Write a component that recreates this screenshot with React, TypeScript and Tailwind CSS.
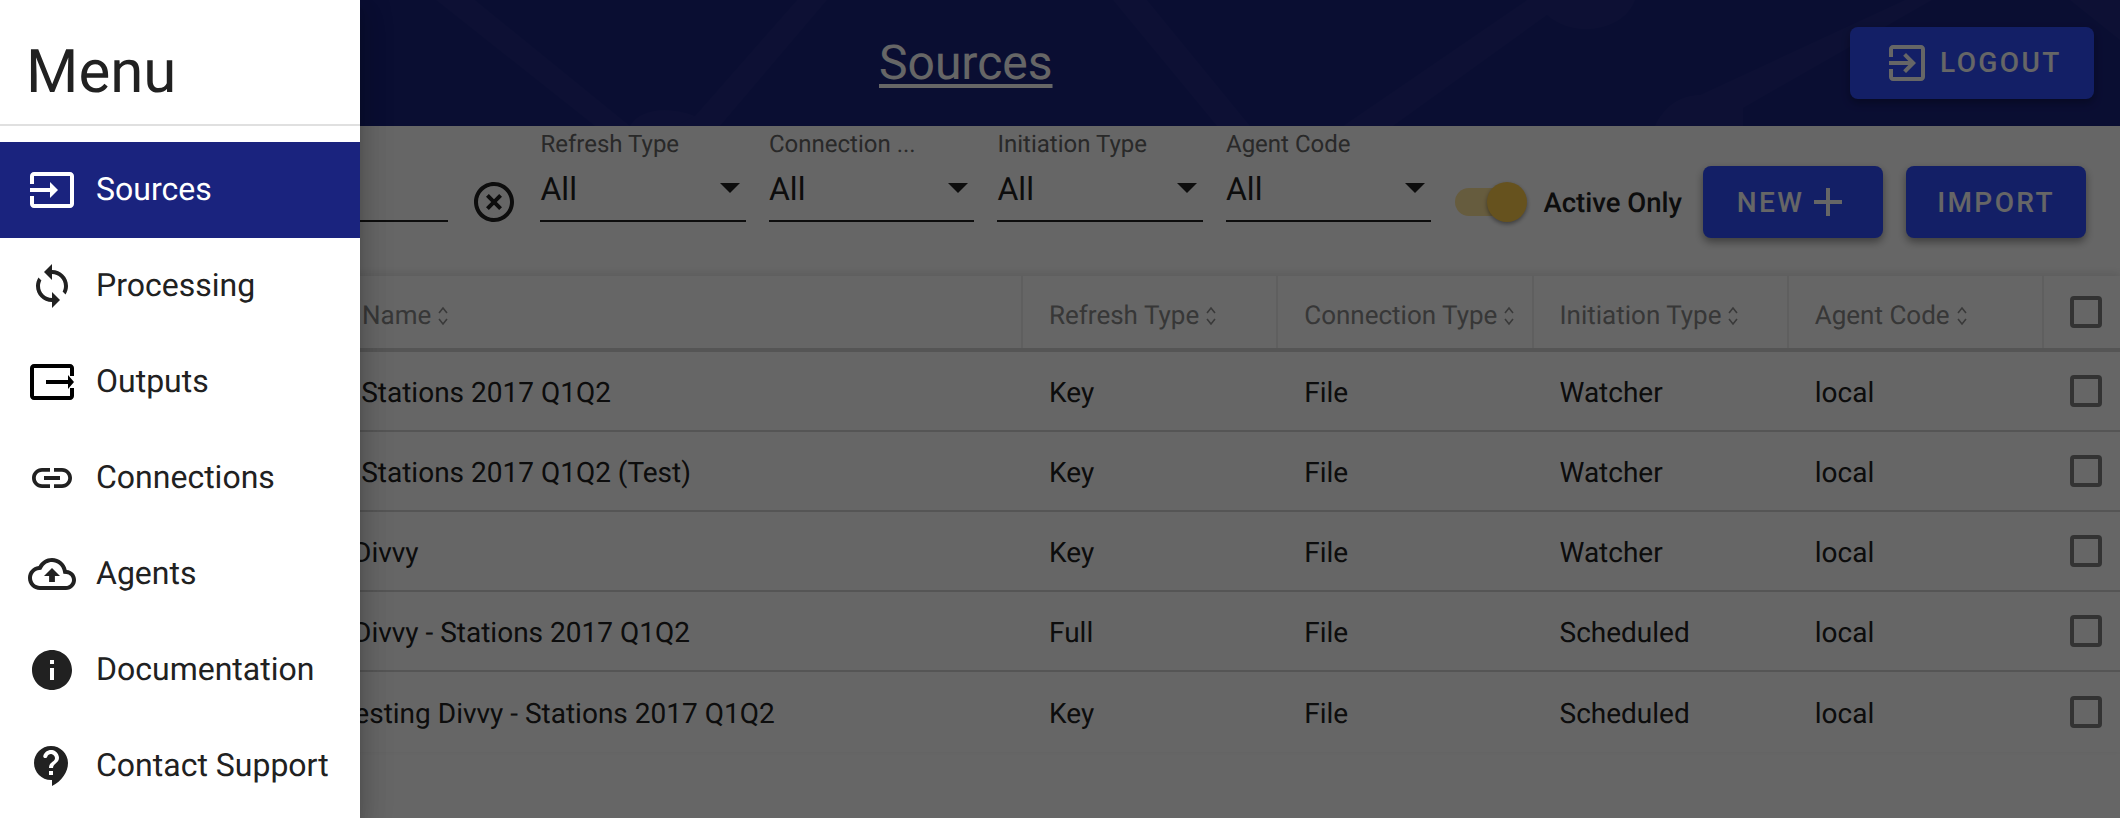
const paths = {
  input: 'M21 3.01H3c-1.1 0-2 .9-2 2V9h2V4.99h18v14.03H3V15H1v4.01c0 1.1.9 1.98 2 1.98h18c1.1 0 2-.88 2-1.98v-14c0-1.11-.9-2-2-2zM11 16l4-4-4-4v3H1v2h10v3z',
  sync: 'M12 4V1L8 5l4 4V6c3.31 0 6 2.69 6 6 0 1.01-.25 1.97-.7 2.8l1.46 1.46C19.54 15.03 20 13.57 20 12c0-4.42-3.58-8-8-8zm0 14c-3.31 0-6-2.69-6-6 0-1.01.25-1.97.7-2.8L5.24 7.74C4.46 8.97 4 10.43 4 12c0 4.42 3.58 8 8 8v3l4-4-4-4v3z',
  output: 'M21 3H3c-1.1 0-2 .9-2 2v14c0 1.1.9 2 2 2h18c1.1 0 2-.9 2-2v-4h-2v4H3V5h18v4h2V5c0-1.1-.9-2-2-2zM20 8.5V11H9v2h11v2.5l3-3.5z',
  link: 'M3.9 12c0-1.71 1.39-3.1 3.1-3.1h4V7H7c-2.76 0-5 2.24-5 5s2.24 5 5 5h4v-1.9H7c-1.71 0-3.1-1.39-3.1-3.1zM8 13h8v-2H8v2zm9-6h-4v1.9h4c1.71 0 3.1 1.39 3.1 3.1s-1.39 3.1-3.1 3.1h-4V17h4c2.76 0 5-2.24 5-5s-2.24-5-5-5z',
  cloud: 'M19.35 10.04C18.67 6.59 15.64 4 12 4 9.11 4 6.6 5.64 5.35 8.04 2.34 8.36 0 10.91 0 14c0 3.31 2.69 6 6 6h13c2.76 0 5-2.24 5-5 0-2.64-2.05-4.78-4.65-4.96zM19 18H6c-2.21 0-4-1.79-4-4 0-2.05 1.53-3.76 3.56-3.97l1.07-.11.5-.95C8.08 7.14 9.94 6 12 6c2.62 0 4.88 1.86 5.39 4.43l.3 1.5 1.53.11c1.56.1 2.78 1.41 2.78 2.96 0 1.65-1.35 3-3 3zM8 13h2.55v3h2.9v-3H16l-4-4z',
  info: 'M12 2C6.48 2 2 6.48 2 12s4.48 10 10 10 10-4.48 10-10S17.52 2 12 2zm1 15h-2v-6h2v6zm0-8h-2V7h2v2z',
  support: 'M11.5 2C6.81 2 3 5.81 3 10.5S6.81 19 11.5 19h.5v3c4.86-2.34 8-7 8-11.5C20 5.81 16.19 2 11.5 2zm1 14.5h-2v-2h2v2zm.4-4.78c-.01.01-.02.03-.03.05-.05.08-.1.16-.14.24-.02.03-.03.07-.04.11-.03.07-.06.14-.08.21-.07.21-.1.43-.1.68H10.5c0-.51.08-.94.2-1.3 0-.01 0-.02.01-.03.01-.04.04-.06.05-.1.06-.16.13-.3.22-.44.03-.05.07-.1.1-.15.03-.04.05-.09.08-.12l.01.01c.84-1.1 2.21-1.44 2.32-2.68.09-.98-.61-1.93-1.57-2.13-1.04-.22-1.98.39-2.3 1.28-.14.36-.47.65-.88.65h-.2c-.6 0-1.04-.59-.87-1.17.55-1.82 2.37-3.09 4.43-2.79 1.69.25 3.04 1.64 3.33 3.33.44 2.44-1.63 3.03-2.53 4.35z',
  clear: 'M14.59 8L12 10.59 9.41 8 8 9.41 10.59 12 8 14.59 9.41 16 12 13.41 14.59 16 16 14.59 13.41 12 16 9.41 14.59 8zM12 2C6.47 2 2 6.47 2 12s4.47 10 10 10 10-4.47 10-10S17.53 2 12 2zm0 18c-4.41 0-8-3.59-8-8s3.59-8 8-8 8 3.59 8 8-3.59 8-8 8z',
  exit: 'M10.09 15.59L11.5 17l5-5-5-5-1.41 1.41L12.67 11H3v2h9.67l-2.58 2.59zM19 3H5c-1.11 0-2 .9-2 2v4h2V5h14v14H5v-4H3v4c0 1.1.89 2 2 2h14c1.1 0 2-.9 2-2V5c0-1.1-.9-2-2-2z',
  add: 'M19 13h-6v6h-2v-6H5v-2h6V5h2v6h6v2z',
  drop: 'M7 10l5 5 5-5z',
};

function Icon({ d, className = '' }: { d: string; className?: string }) {
  return (
    <svg viewBox="0 0 24 24" fill="currentColor" className={`w-12 h-12 shrink-0 ${className}`}>
      <path d={d} />
    </svg>
  );
}

const menu = [
  { label: 'Sources', icon: paths.input, active: true },
  { label: 'Processing', icon: paths.sync },
  { label: 'Outputs', icon: paths.output, black: true },
  { label: 'Connections', icon: paths.link },
  { label: 'Agents', icon: paths.cloud },
  { label: 'Documentation', icon: paths.info },
  { label: 'Contact Support', icon: paths.support },
];

const filters = ['Refresh Type', 'Connection ...', 'Initiation Type', 'Agent Code'];

const columns = ['Refresh Type', 'Connection Type', 'Initiation Type', 'Agent Code'];

const rows = [
  { name: 'Divvy - Stations 2017 Q1Q2', pad: 'pl-[274px]', cells: ['Key', 'File', 'Watcher', 'local'] },
  { name: 'Divvy - Stations 2017 Q1Q2 (Test)', pad: 'pl-[274px]', cells: ['Key', 'File', 'Watcher', 'local'] },
  { name: 'Divvy', pad: 'pl-[353px]', cells: ['Key', 'File', 'Watcher', 'local'] },
  { name: 'Divvy - Stations 2017 Q1Q2', pad: 'pl-[353px]', cells: ['Full', 'File', 'Scheduled', 'local'] },
  { name: 'Testing Divvy - Stations 2017 Q1Q2', pad: 'pl-[339px]', cells: ['Key', 'File', 'Scheduled', 'local'] },
];

function SortIcon() {
  return (
    <svg viewBox="0 0 10 20" fill="none" stroke="#8f8f8f" strokeWidth="1.6" className="w-[10px] h-5 ml-[7px] shrink-0">
      <path d="M1 7l4-5 4 5M1 13l4 5 4-5" />
    </svg>
  );
}

function Checkbox() {
  return <div className="w-8 h-8 border-4 border-[#808080] rounded-[4px]" />;
}

// faint shapes in the app bar background
function HeaderPattern() {
  return (
    <svg viewBox="0 0 2120 126" className="absolute inset-0 w-full h-full" fill="#ffffff" fillOpacity="0.03">
      <path d="M436 0h39l155 126h-35z" />
      <path d="M797 0h30L720 126h-45l20-10z" />
      <path d="M630 126c10-18 40-20 65-10l-20 10z" />
      <path d="M1113 0h34l103 126h-33z" />
      <path d="M1527 0h108c-10 30-60 40-88 15L1393 126h-50z" />
      <path d="M1905 0h27L1743 108v18h-88c10-22 28-31 45-31z" />
      <path d="M2070 0h50v40z" />
    </svg>
  );
}

export default function App() {
  return (
    <div className="relative w-full h-screen overflow-hidden bg-white text-[#212121] font-['Roboto',sans-serif] [text-rendering:geometricPrecision]">
      {/* App bar */}
      <header className="relative h-[126px] bg-[#1a237e] flex items-center justify-between pl-[879px] pr-[26px] text-white">
        <HeaderPattern />
        <h1 className="relative text-[48px] leading-none underline underline-offset-[5px] decoration-[4px]">Sources</h1>
        <button className="relative h-[72px] w-[244px] flex items-center pl-[33px] gap-[9px] rounded-lg bg-[#304ffe] shadow-[0_4px_8px_rgba(0,0,0,0.3)] text-[28px] font-medium tracking-[2.4px]">
          <Icon d={paths.exit} />
          LOGOUT
        </button>
      </header>

      {/* Filters */}
      <div className="h-[150px] pt-[2px] flex items-center justify-end pr-[34px]">
        <div className="self-start mt-[2px] w-[200px] h-[92px] border-b-2 border-[#212121] mr-[22px]" />
        <Icon d={paths.clear} className="text-[#212121] mr-[22px]" />
        <div className="self-start mt-[2px] flex gap-[23px]">
          {filters.map((f) => (
            <div key={f} className="w-[205.5px]">
              <div className="text-[24px] leading-[28px] text-[#666666]">{f}</div>
              <div className="h-[64px] flex items-center justify-between border-b-2 border-[#212121] text-[32px]">
                All
                <Icon d={paths.drop} className="-mr-2 -mt-[4px]" />
              </div>
            </div>
          ))}
        </div>
        {/* Active only switch */}
        <div className="relative ml-[24px] w-[68px] h-7 rounded-full bg-[#ffe59b] mr-[20px]">
          <div className="absolute -top-[6px] -right-1 w-10 h-10 rounded-full bg-[#ffcc4d] shadow-[0_2px_4px_rgba(0,0,0,0.4)]" />
        </div>
        <span className="text-[27.5px] font-medium mr-[21px] pt-[2px]">Active Only</span>
        <button className="h-[72px] w-[180px] flex items-center justify-center rounded-lg bg-[#304ffe] shadow-[0_4px_8px_rgba(0,0,0,0.4)] text-white text-[28px] font-medium tracking-[2.4px]">
          <span className="pt-[2px] ml-[3px]">NEW</span>
          <Icon d={paths.add} className="-my-2" />
        </button>
        <button className="h-[72px] w-[180px] ml-[23px] pt-[2px] rounded-lg bg-[#304ffe] shadow-[0_4px_8px_rgba(0,0,0,0.4)] text-white text-[28px] font-medium tracking-[2.4px]">
          IMPORT
        </button>
      </div>

      {/* Table */}
      <div className="shadow-[0_-3px_8px_rgba(0,0,0,0.1)] text-[28px]">
        <div className="grid grid-cols-[1023px_255.25px_255.25px_255.25px_255.25px_1fr] h-[76px] border-b-4 border-[#d5d5d5] text-[#8a8a8a] text-[26px]">
          <div className="flex items-center pl-[275px] pt-[8px] border-r-2 border-[#ededed]">
            Source Name
            <SortIcon />
          </div>
          {columns.map((c) => (
            <div key={c} className="flex items-center pl-[26px] pt-[8px] border-r-2 border-[#ededed] whitespace-nowrap">
              {c}
              <SortIcon />
            </div>
          ))}
          <div className="flex items-center pl-[26px]">
            <Checkbox />
          </div>
        </div>
        {rows.map((r, i) => (
          <div
            key={i}
            className={`grid grid-cols-[1023px_255.25px_255.25px_255.25px_255.25px_1fr] items-center h-[80px] ${i < rows.length - 1 ? 'border-b-2 border-[#d5d5d5]' : ''}`}
          >
            <div className={`whitespace-nowrap pt-[3px] ${r.pad}`}>{r.name}</div>
            {r.cells.map((c, j) => (
              <div key={j} className="pl-[26px] pt-[3px]">{c}</div>
            ))}
            <div className="pl-[26px]">
              <Checkbox />
            </div>
          </div>
        ))}
      </div>

      {/* Backdrop */}
      <div className="absolute inset-0 bg-black/60" />

      {/* Drawer */}
      <aside className="absolute left-0 top-0 bottom-0 w-[360px] bg-white shadow-[0_16px_24px_2px_rgba(0,0,0,0.14),0_6px_30px_5px_rgba(0,0,0,0.12),0_8px_10px_-5px_rgba(0,0,0,0.2)]">
        <div className="h-[126px] border-b-2 border-[#e0e0e0] pl-[26px] pt-[19px] flex items-center">
          <span className="text-[60px] leading-none">Menu</span>
        </div>
        <nav className="pt-4">
          {menu.map((m) => (
            <div
              key={m.label}
              className={`h-24 flex items-center pl-7 gap-5 text-[32px] ${m.active ? 'bg-[#1a237e] text-white' : ''}`}
            >
              <Icon d={m.icon} className={m.black ? 'text-black' : ''} />
              <span className="pb-[2px]">{m.label}</span>
            </div>
          ))}
        </nav>
      </aside>
    </div>
  );
}
